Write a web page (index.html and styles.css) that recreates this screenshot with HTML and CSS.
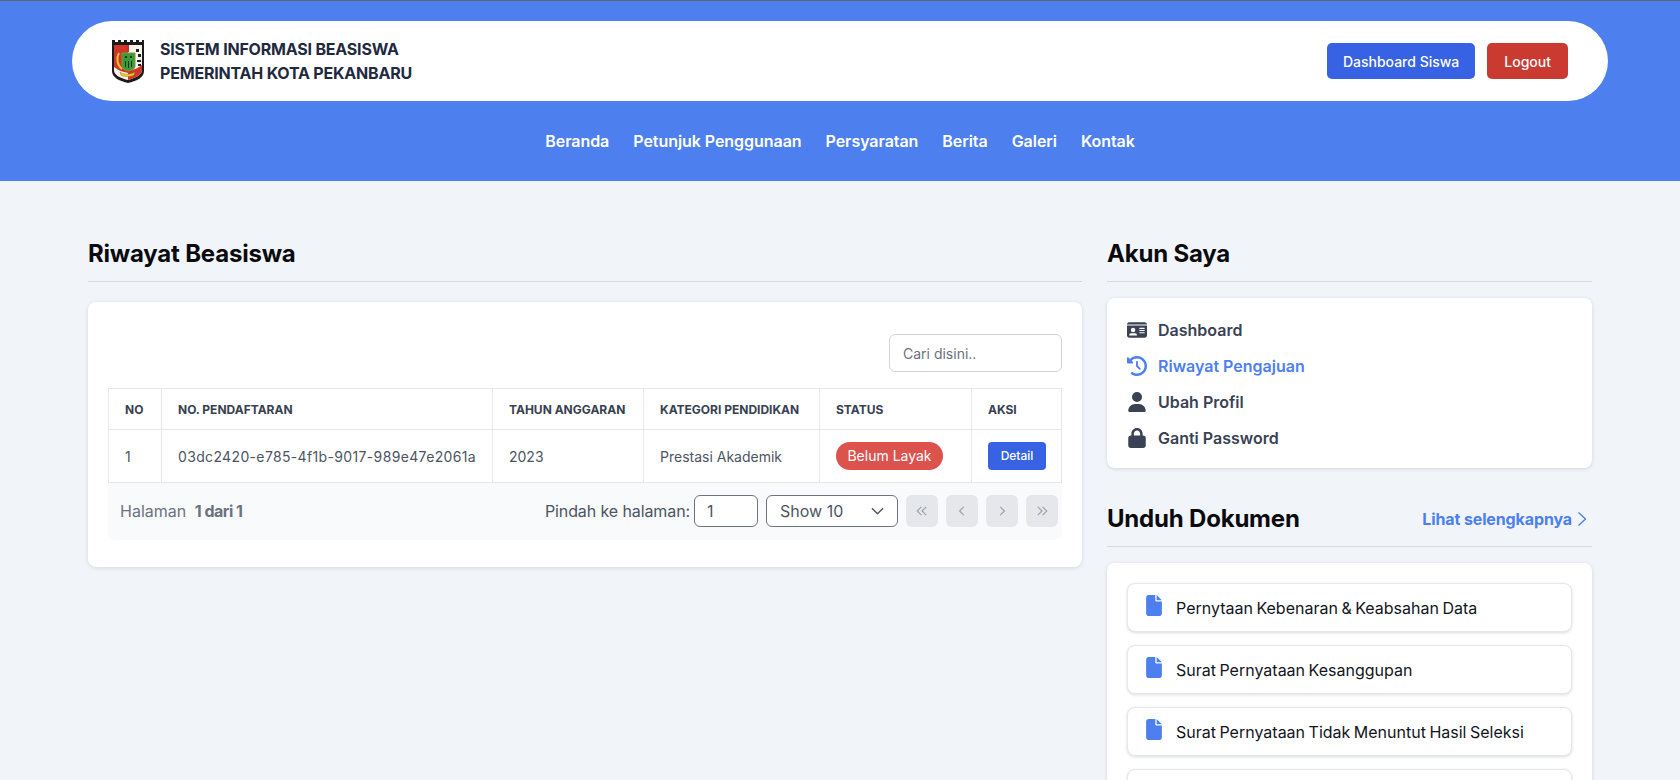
FILE: index.html
```html
<!DOCTYPE html>
<html lang="id">
<head>
    <meta charset="UTF-8">
    <meta name="viewport" content="width=device-width, initial-scale=1.0">
    <title>Riwayat Beasiswa</title>
    <link rel="stylesheet" href="styles.css">
</head>
<body>
<header class="site-header">
    <div class="topbar">
        <a class="brand" href="#">
            <svg class="brand-logo" viewBox="0 0 32 43" aria-hidden="true">
                <path d="M0 0h3v2h3V0h3v2h3V0h3v2h3V0h3v2h3V0h3v2h3V0h2v31c0 7-8 10-16 12C8 41 0 38 0 31z" fill="#1d1a1a"/>
                <path d="M2 5h14v35C8 38 2 35 2 30z" fill="#d2362b"/>
                <path d="M16 5h14v25c0 5-7 8-14 10z" fill="#f7f4f0"/>
                <path d="M2 27c5 4 10 5 14 6v7C8 38 2 35 2 30z" fill="#f7f4f0"/>
                <path d="M17 30c5 0 9-2 13-5v5c0 5-7 8-14 10v-9z" fill="#d2362b"/>
                <rect x="24" y="9" width="3" height="3" fill="#222"/>
                <rect x="26" y="14" width="3" height="3" fill="#222"/>
                <rect x="25" y="20" width="4" height="2" fill="#222"/>
                <rect x="26" y="24" width="3" height="2" fill="#222"/>
                <path d="M15 5h2v7h-2z" fill="#b9332a"/>
                <path d="M7 13c-3 5-2 12 3 16" fill="none" stroke="#ecc72c" stroke-width="2"/>
                <path d="M10 13h13v13c0 3-3 4-6.500 5C13 30 10 29 10 26z" fill="#3c9a3d" stroke="#7f9a2c"/>
                <path d="M13 16h2v2h-2zM18 16h2v2h-2zM13 21h1v6h-1zM16 21h1v7h-1zM19 21h1v6h-1z" fill="#123a1c"/>
                <path d="M8 32c4 3 11 3 15 0l-1 3c-4 2-10 2-13 0z" fill="#f0d332" stroke="#8a7a14" stroke-width=".5"/>
            </svg>
            <span class="brand-text">SISTEM INFORMASI BEASISWA<br>PEMERINTAH KOTA PEKANBARU</span>
        </a>
        <div class="topbar-actions">
            <a class="btn btn-blue" href="#">Dashboard Siswa</a>
            <a class="btn btn-red" href="#">Logout</a>
        </div>
    </div>
    <nav class="main-nav">
        <a href="#">Beranda</a>
        <a href="#">Petunjuk Penggunaan</a>
        <a href="#">Persyaratan</a>
        <a href="#">Berita</a>
        <a href="#">Galeri</a>
        <a href="#">Kontak</a>
    </nav>
</header>

<main class="content">
    <section>
        <div class="section-title"><h2>Riwayat Beasiswa</h2></div>
        <div class="card table-card">
            <div class="table-search">
                <input type="text" placeholder="Cari disini..">
            </div>
            <table class="data-table">
                <thead>
                    <tr>
                        <th class="col-no">NO</th>
                        <th class="col-reg">NO. PENDAFTARAN</th>
                        <th class="col-year">TAHUN ANGGARAN</th>
                        <th class="col-cat">KATEGORI PENDIDIKAN</th>
                        <th class="col-status">STATUS</th>
                        <th>AKSI</th>
                    </tr>
                </thead>
                <tbody>
                    <tr>
                        <td>1</td>
                        <td class="cell-uuid">03dc2420-e785-4f1b-9017-989e47e2061a</td>
                        <td>2023</td>
                        <td>Prestasi Akademik</td>
                        <td><span class="badge-red">Belum Layak</span></td>
                        <td><a class="btn-detail" href="#">Detail</a></td>
                    </tr>
                </tbody>
            </table>
            <div class="pager">
                <div class="pager-info">Halaman <b>1 dari 1</b></div>
                <div class="pager-controls">
                    <label class="pager-jump">Pindah ke halaman:
                        <input type="text" value="1">
                    </label>
                    <div class="pager-select">
                        <span>Show 10</span>
                        <svg viewBox="0 0 14 8" aria-hidden="true"><path d="M1 1l6 6 6-6" fill="none" stroke="currentColor" stroke-width="1.5"/></svg>
                    </div>
                    <button class="page-btn" type="button"><svg viewBox="0 0 10 10"><path d="M4.500 1.500L1 5l3.500 3.500M8.500 1.500L5 5l3.500 3.500"/></svg></button>
                    <button class="page-btn" type="button"><svg viewBox="0 0 10 10"><path d="M6.500 1.500L3 5l3.500 3.500"/></svg></button>
                    <button class="page-btn" type="button"><svg viewBox="0 0 10 10"><path d="M3.500 1.500L7 5 3.500 8.500"/></svg></button>
                    <button class="page-btn" type="button"><svg viewBox="0 0 10 10"><path d="M1.500 1.500L5 5 1.500 8.500M5.500 1.500L9 5 5.500 8.500"/></svg></button>
                </div>
            </div>
        </div>
    </section>

    <aside>
        <div class="section-title"><h2>Akun Saya</h2></div>
        <div class="card menu-card">
            <a class="menu-item" href="#">
                <svg viewBox="0 0 576 512"><path d="M0 96l576 0c0-35.3-28.7-64-64-64H64C28.7 32 0 60.7 0 96zm0 32V416c0 35.3 28.7 64 64 64H512c35.3 0 64-28.7 64-64V128H0zM64 405.3c0-29.5 23.9-53.3 53.3-53.3H234.7c29.5 0 53.3 23.9 53.3 53.3c0 5.9-4.8 10.7-10.7 10.7H74.7c-5.9 0-10.7-4.8-10.7-10.7zM176 192a64 64 0 1 1 0 128 64 64 0 1 1 0-128zm176 16c0-8.8 7.2-16 16-16H496c8.8 0 16 7.2 16 16s-7.2 16-16 16H368c-8.8 0-16-7.2-16-16zm0 64c0-8.8 7.2-16 16-16H496c8.8 0 16 7.2 16 16s-7.2 16-16 16H368c-8.8 0-16-7.2-16-16zm0 64c0-8.8 7.2-16 16-16H496c8.8 0 16 7.2 16 16s-7.2 16-16 16H368c-8.8 0-16-7.2-16-16z"/></svg>
                Dashboard
            </a>
            <a class="menu-item active" href="#">
                <svg viewBox="0 0 512 512"><path d="M75 75L41 41C25.9 25.9 0 36.6 0 57.9V168c0 13.3 10.7 24 24 24H134.1c21.4 0 32.1-25.9 17-41l-30.8-30.8C155 85.5 203 64 256 64c106 0 192 86 192 192s-86 192-192 192c-40.8 0-78.6-12.7-109.7-34.4c-14.5-10.1-34.4-6.6-44.6 7.9s-6.6 34.4 7.9 44.6C151.2 495 201.7 512 256 512c141.4 0 256-114.6 256-256S397.4 0 256 0C185.3 0 121.3 28.7 75 75zm181 53c-13.3 0-24 10.7-24 24V256c0 6.4 2.5 12.5 7 17l72 72c9.4 9.4 24.6 9.4 33.9 0s9.4-24.6 0-33.9l-65-65V152c0-13.3-10.7-24-24-24z"/></svg>
                Riwayat Pengajuan
            </a>
            <a class="menu-item" href="#">
                <svg viewBox="0 0 448 512"><path d="M224 256A128 128 0 1 0 224 0a128 128 0 1 0 0 256zm-45.7 48C79.8 304 0 383.8 0 482.3C0 498.7 13.3 512 29.7 512H418.3c16.4 0 29.7-13.3 29.7-29.7C448 383.8 368.2 304 269.7 304H178.3z"/></svg>
                Ubah Profil
            </a>
            <a class="menu-item" href="#">
                <svg viewBox="0 0 448 512"><path d="M144 144v48H304V144c0-44.2-35.8-80-80-80s-80 35.8-80 80zM80 192V144C80 64.5 144.5 0 224 0s144 64.5 144 144v48h16c35.3 0 64 28.7 64 64V448c0 35.3-28.7 64-64 64H64c-35.3 0-64-28.7-64-64V256c0-35.3 28.7-64 64-64H80z"/></svg>
                Ganti Password
            </a>
        </div>

        <div class="section-title title-docs">
            <h2>Unduh Dokumen</h2>
            <a class="more-link" href="#">Lihat selengkapnya
                <svg viewBox="0 0 10 16"><path d="M1.500 1.500L8.500 8l-7 6.500" fill="none" stroke="currentColor" stroke-width="1.4"/></svg>
            </a>
        </div>
        <div class="card docs-card">
            <a class="doc-item" href="#"><svg viewBox="0 0 384 512"><path d="M0 64C0 28.7 28.7 0 64 0H224V128c0 17.7 14.3 32 32 32H384V448c0 35.3-28.7 64-64 64H64c-35.3 0-64-28.7-64-64V64zm384 64H256V0L384 128z"/></svg>Pernytaan Kebenaran &amp; Keabsahan Data</a>
            <a class="doc-item" href="#"><svg viewBox="0 0 384 512"><path d="M0 64C0 28.7 28.7 0 64 0H224V128c0 17.7 14.3 32 32 32H384V448c0 35.3-28.7 64-64 64H64c-35.3 0-64-28.7-64-64V64zm384 64H256V0L384 128z"/></svg>Surat Pernyataan Kesanggupan</a>
            <a class="doc-item" href="#"><svg viewBox="0 0 384 512"><path d="M0 64C0 28.7 28.7 0 64 0H224V128c0 17.7 14.3 32 32 32H384V448c0 35.3-28.7 64-64 64H64c-35.3 0-64-28.7-64-64V64zm384 64H256V0L384 128z"/></svg>Surat Pernyataan Tidak Menuntut Hasil Seleksi</a>
            <a class="doc-item" href="#"></a>
        </div>
    </aside>
</main>
</body>
</html>
```

FILE: styles.css
```css
* {
    box-sizing: border-box;
}
html, body {
    height: 780px;
    overflow: hidden;
}
body {
    margin: 0;
    font-family: 'Inter', sans-serif;
    background-color: #f1f5f9;
    color: #374151;
}
a {
    text-decoration: none;
    color: inherit;
}

/* header */
.site-header {
    height: 181px;
    background-color: #4d80ee;
    border-top: 1px solid #5b6478;
    padding: 20px 72px 0;
}
.topbar {
    height: 80px;
    background: white;
    border-radius: 40px;
    padding: 0 40px;
    display: flex;
    align-items: center;
    justify-content: space-between;
}
.brand {
    display: flex;
    align-items: center;
    gap: 16px;
}
.brand-logo {
    width: 32px;
    height: 43px;
}
.brand-text {
    font-size: 16px;
    font-weight: 700;
    line-height: 24px;
    letter-spacing: -0.2px;
    color: #1f2a40;
}
.topbar-actions {
    display: flex;
    gap: 12px;
}
.btn {
    height: 36px;
    padding: 0 17px;
    border-radius: 5px;
    color: white;
    font-size: 14px;
    font-weight: 500;
    display: flex;
    align-items: center;
}
.btn-blue {
    padding: 0 16px;
    background-color: #3662e3;
}
.btn-red {
    background-color: #ca3a31;
}
.main-nav {
    height: 80px;
    display: flex;
    align-items: center;
    justify-content: center;
    gap: 24px;
    color: white;
    font-size: 16px;
    font-weight: 600;
    letter-spacing: -0.05px;
}

/* layout */
.content {
    display: grid;
    grid-template-columns: 994px 485px;
    gap: 25px;
    padding: 50px 88px 0;
}
.section-title {
    height: 51px;
    padding-bottom: 5px;
    border-bottom: 1px solid #d5d9e0;
    display: flex;
    align-items: center;
    justify-content: space-between;
}
.section-title h2 {
    margin: 0;
    font-size: 24px;
    font-weight: 700;
    color: #0b0b0f;
    letter-spacing: -0.2px;
}
.card {
    background: white;
    border-radius: 8px;
    box-shadow: 0 1px 4px rgba(30, 41, 59, 0.14);
}

/* table card */
.table-card {
    margin-top: 20px;
    height: 265px;
    padding: 32px 20px 0;
}
.table-search {
    display: flex;
    justify-content: flex-end;
    margin-bottom: 16px;
}
.table-search input {
    width: 173px;
    height: 38px;
    padding: 0 13px;
    border: 1px solid #d1d5db;
    border-radius: 6px;
    font: 14px 'Inter', sans-serif;
}
.table-search input::placeholder {
    color: #6b7280;
}
.data-table {
    width: 954px;
    table-layout: fixed;
    border-collapse: collapse;
    font-size: 14px;
}
.data-table th, .data-table td {
    border: 1px solid #e5e7eb;
    padding: 0 16px;
    text-align: left;
    white-space: nowrap;
}
.data-table th {
    height: 41px;
    font-size: 12px;
    font-weight: 700;
    color: #374151;
}
.data-table td {
    height: 53px;
    color: #4b5563;
}
.cell-uuid {
    letter-spacing: 0.35px;
}
.col-no { width: 53px; }
.col-reg { width: 331px; }
.col-year { width: 151px; }
.col-cat { width: 176px; }
.col-status { width: 152px; }
.badge-red {
    display: inline-block;
    height: 28px;
    line-height: 28px;
    width: 107px;
    text-align: center;
    background-color: #dc524c;
    color: white;
    border-radius: 14px;
}
.btn-detail {
    display: block;
    width: 58px;
    height: 28px;
    line-height: 28px;
    text-align: center;
    background-color: #3662e3;
    color: white;
    border-radius: 4px;
    font-size: 12px;
    font-weight: 500;
}

/* pagination */
.pager {
    height: 57px;
    background-color: #f9fafb;
    border-radius: 0 0 8px 8px;
    padding: 0 4px 2px 12px;
    display: flex;
    align-items: center;
    justify-content: space-between;
    font-size: 16px;
    color: #6b7280;
}
.pager-info b {
    font-weight: 700;
    margin-left: 4px;
    letter-spacing: -0.5px;
}
.pager-controls {
    display: flex;
    align-items: center;
    gap: 8px;
}
.pager-jump {
    display: flex;
    align-items: center;
    gap: 4px;
    color: #4b5563;
    letter-spacing: -0.1px;
}
.pager-jump input {
    width: 64px;
    height: 32px;
    padding: 0 12px;
    border: 1px solid #6b7280;
    border-radius: 6px;
    background: white;
    font: 16px 'Inter', sans-serif;
    color: #4b5563;
}
.pager-select {
    width: 132px;
    height: 32px;
    padding: 0 13px;
    border: 1px solid #6b7280;
    border-radius: 6px;
    background: white;
    color: #4b5563;
    display: flex;
    align-items: center;
    justify-content: space-between;
}
.pager-select svg {
    width: 13px;
    height: 8px;
}
.page-btn {
    width: 32px;
    height: 32px;
    padding: 0;
    border: none;
    border-radius: 6px;
    background-color: #e5e7eb;
    display: flex;
    align-items: center;
    justify-content: center;
}
.page-btn svg {
    width: 12px;
    height: 12px;
    fill: none;
    stroke: #9ca3af;
    stroke-width: 1;
}

/* sidebar */
.menu-card {
    margin-top: 16px;
    height: 170px;
    padding: 14px 20px;
}
.menu-item {
    height: 36px;
    display: flex;
    align-items: center;
    gap: 11px;
    font-size: 16px;
    font-weight: 600;
    color: #3a4254;
}
.menu-item svg {
    width: 20px;
    height: 20px;
    fill: currentColor;
    flex-shrink: 0;
}
.menu-item.active {
    color: #4d80ee;
}
.title-docs {
    margin-top: 28px;
}
.more-link {
    display: flex;
    align-items: center;
    gap: 5px;
    font-size: 16px;
    font-weight: 700;
    letter-spacing: -0.12px;
    color: #4d80ee;
    margin-right: 5px;
}
.more-link svg {
    width: 10px;
    height: 16px;
}
.docs-card {
    margin-top: 16px;
    padding: 20px 20px 20px;
}
.doc-item {
    height: 49px;
    margin-bottom: 13px;
    padding: 0 18px;
    display: flex;
    align-items: center;
    gap: 14px;
    background: white;
    border: 1px solid #e5e7eb;
    border-radius: 8px;
    box-shadow: 0 1px 3px rgba(30, 41, 59, 0.16);
    font-size: 16px;
    font-weight: 400;
    word-spacing: -1px;
    color: #12151c;
}
.doc-item svg {
    width: 16px;
    height: 21px;
    margin-top: -4px;
    fill: #4d80ee;
    flex-shrink: 0;
}
```
